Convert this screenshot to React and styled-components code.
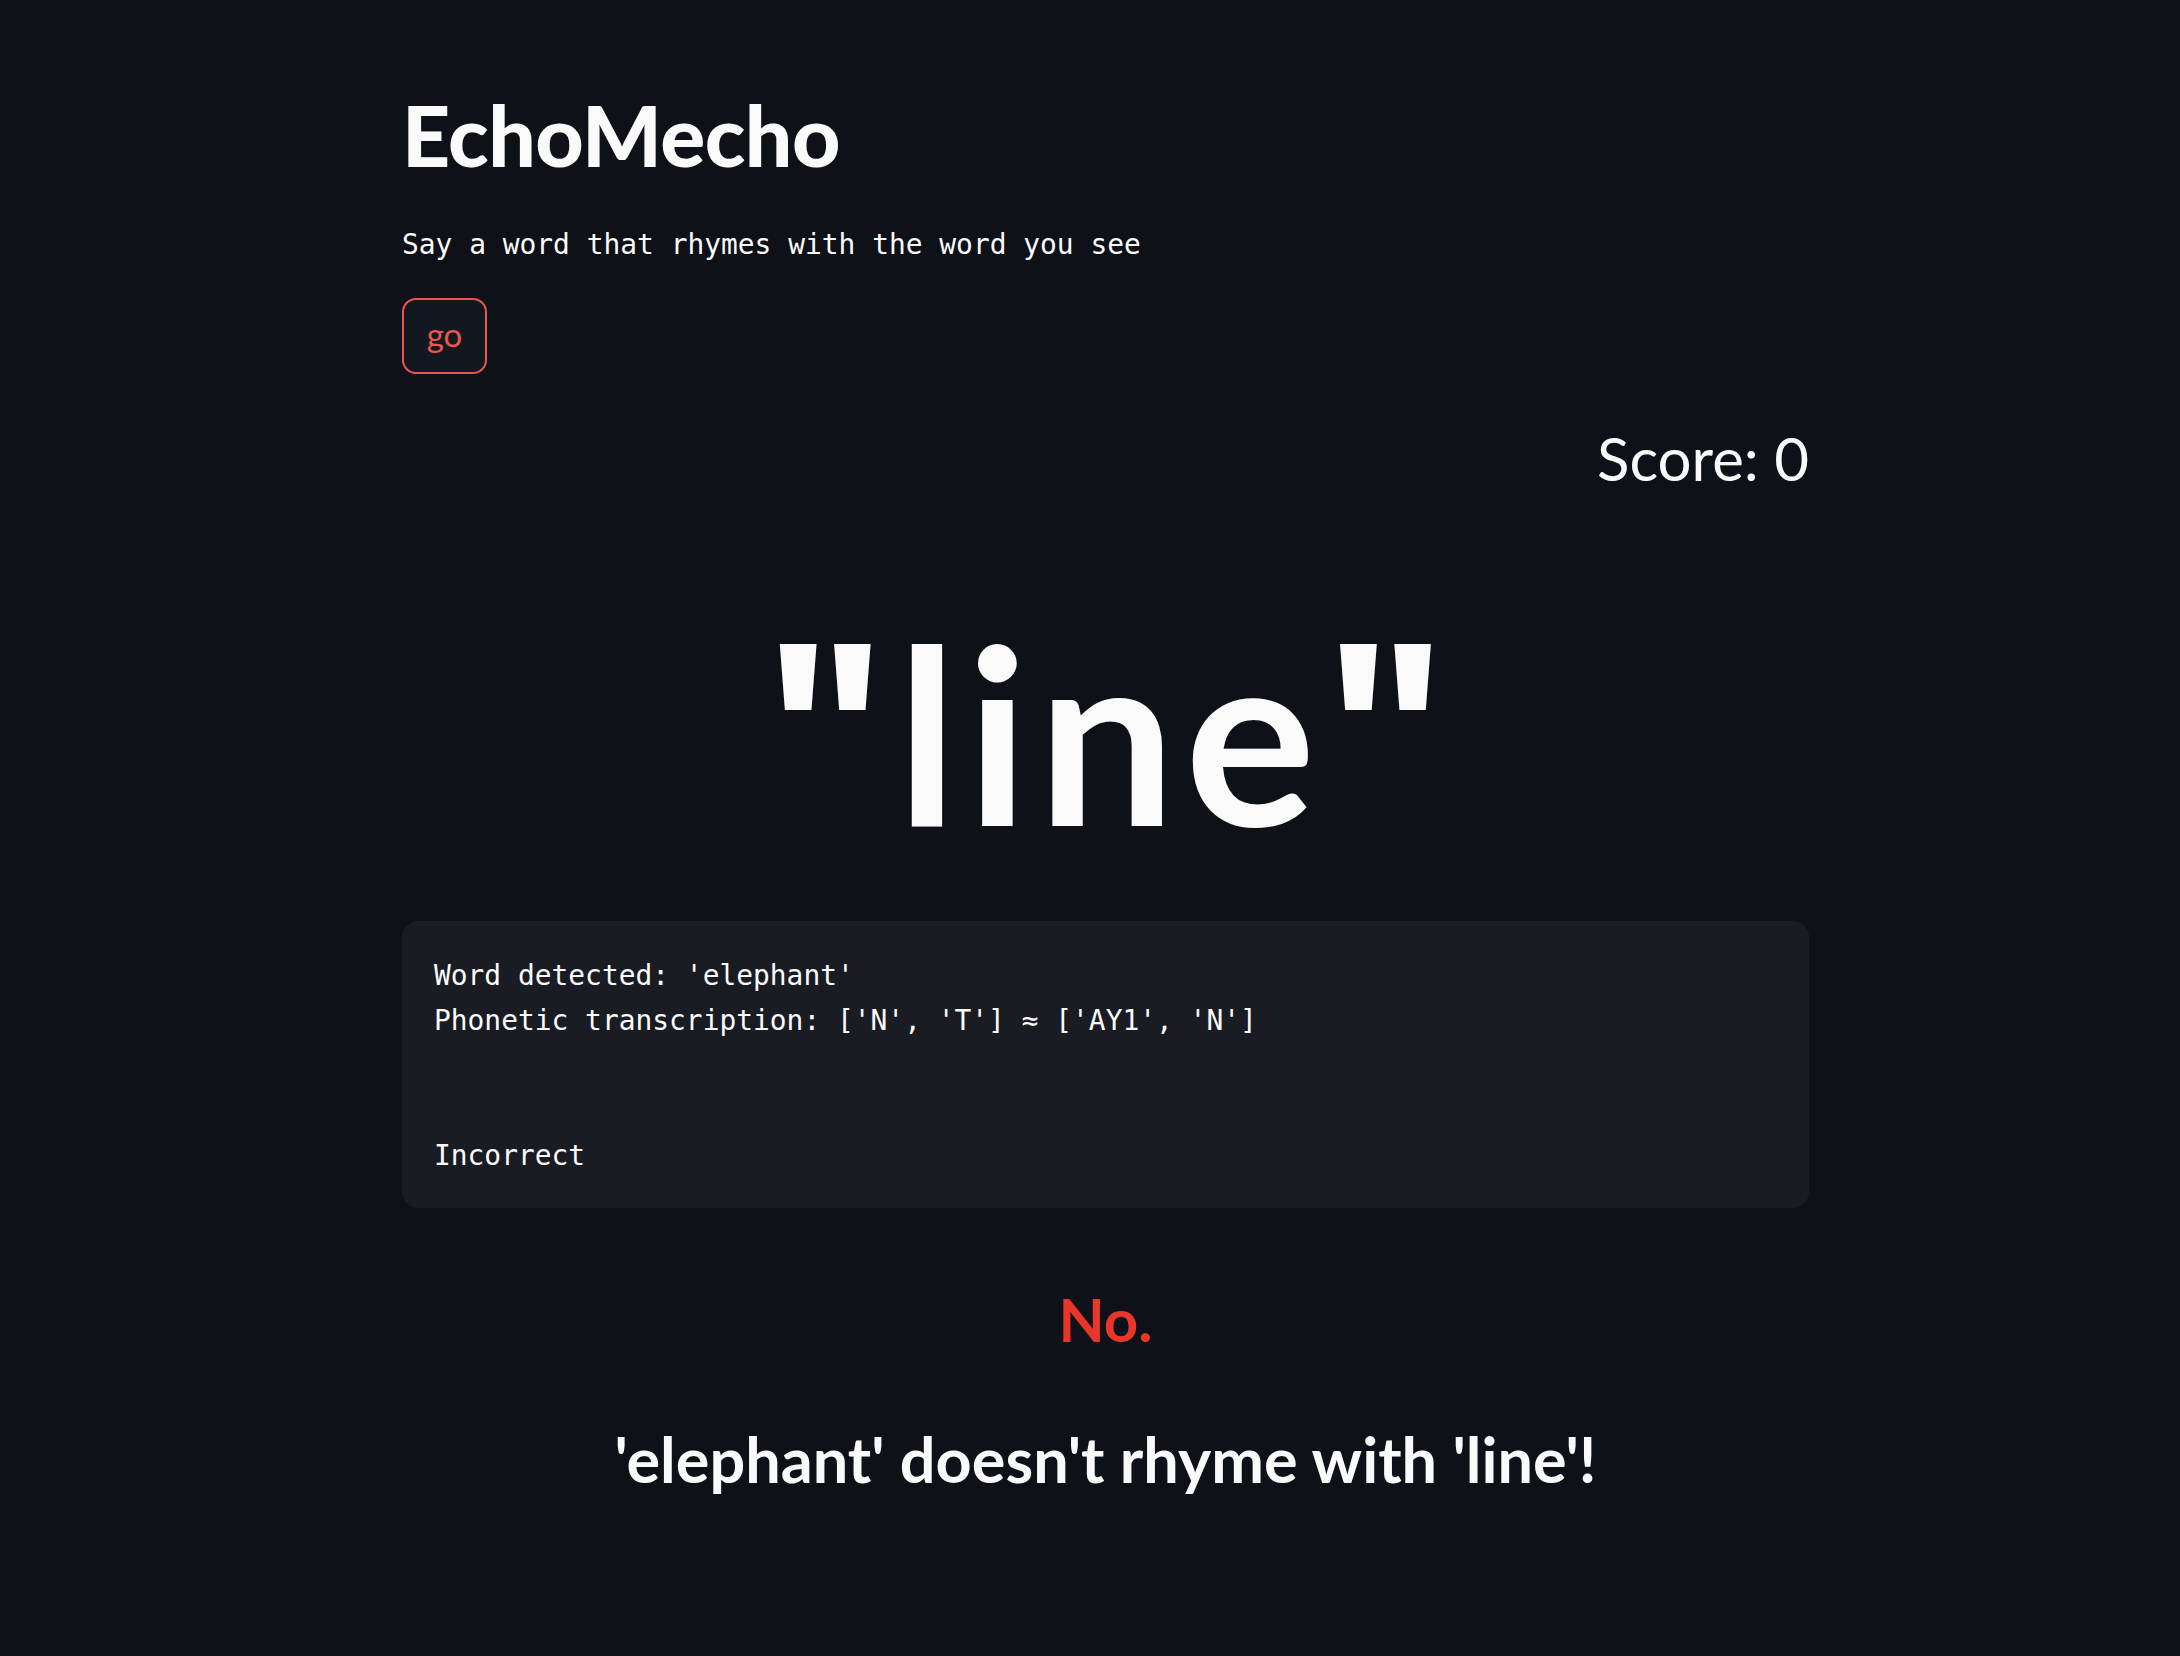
import React from "react";
import styled, { createGlobalStyle } from "styled-components";

const colors = {
  background: "#0e1117",
  text: "#fafafa",
  codeBg: "#1a1c24",
  buttonBg: "#131720",
  accent: "#e8564d",
  error: "#e8362a",
};

const sans = `Lato, "Noto Sans", sans-serif`;
const mono = `"DejaVu Sans Mono", "Liberation Mono", monospace`;

const GlobalStyle = createGlobalStyle`
  html, body {
    margin: 0;
    padding: 0;
    background-color: ${colors.background};
    color: ${colors.text};
    font-family: ${sans};
  }
`;

const Page = styled.main`
  min-height: 1656px;
  box-sizing: border-box;
  padding: 85px 0 120px 402px;
  width: 1809px;
  display: flex;
  flex-direction: column;
`;

const Title = styled.h1`
  margin: 0;
  font-size: 84px;
  font-weight: 900;
  line-height: 1.2;
  letter-spacing: -0.5px;
`;

const Caption = styled.p`
  margin: 37px 0 0;
  font-family: ${mono};
  font-size: 27.9px;
  line-height: 43px;
  white-space: pre;
`;

const GoButton = styled.button`
  margin-top: 32px;
  align-self: flex-start;
  width: 85px;
  height: 76px;
  box-sizing: border-box;
  border: 2px solid ${colors.accent};
  border-radius: 14px;
  background: ${colors.buttonBg};
  color: ${colors.accent};
  font-family: ${sans};
  font-size: 33px;
  padding: 0 0 4px;
  cursor: pointer;
`;

const Score = styled.div`
  margin-top: 48px;
  text-align: right;
  font-size: 60px;
  line-height: 1.2;
`;

const BigWord = styled.div`
  margin-top: 115px;
  text-align: center;
  font-size: 245px;
  font-weight: 700;
  line-height: 245px;
`;

const Letters = styled.span`
  letter-spacing: 9px;
`;

const Mark = styled.span`
  font-family: "Noto Sans", sans-serif;
  font-weight: 700;
  font-size: 255px;
  line-height: 0;
  margin: ${(p) => (p.$side === "left" ? "0 10px 0 0" : "0")};
`;

const Output = styled.pre`
  margin: 67px 0 0;
  padding: 32px 32px 30px;
  background: ${colors.codeBg};
  border-radius: 16px;
  font-family: ${mono};
  font-size: 27.9px;
  line-height: 45px;
`;

const Verdict = styled.div`
  margin-top: ${(p) => p.$gap}px;
  text-align: center;
  font-size: ${(p) => p.$size}px;
  font-weight: 700;
  line-height: 1.2;
  color: ${(p) => p.$color || colors.text};
`;

const target = "line";
const detected = "elephant";

export default function App() {
  const log = [
    `Word detected: '${detected}'`,
    `Phonetic transcription: ['N', 'T'] ≈ ['AY1', 'N']`,
    "",
    "",
    "Incorrect",
  ].join("\n");

  return (
    <>
      <GlobalStyle />
      <Page>
        <Title>EchoMecho</Title>
        <Caption>Say a word that rhymes with the word you see</Caption>
        <GoButton>go</GoButton>
        <Score>Score: 0</Score>
        <BigWord>
          <Mark $side="left">"</Mark>
          <Letters>{target}</Letters>
          <Mark $side="right">"</Mark>
        </BigWord>
        <Output>{log}</Output>
        <Verdict $gap={75} $size={60} $color={colors.error}>
          No.
        </Verdict>
        <Verdict $gap={66} $size={63}>
          '{detected}' doesn't rhyme with '{target}'!
        </Verdict>
      </Page>
    </>
  );
}
